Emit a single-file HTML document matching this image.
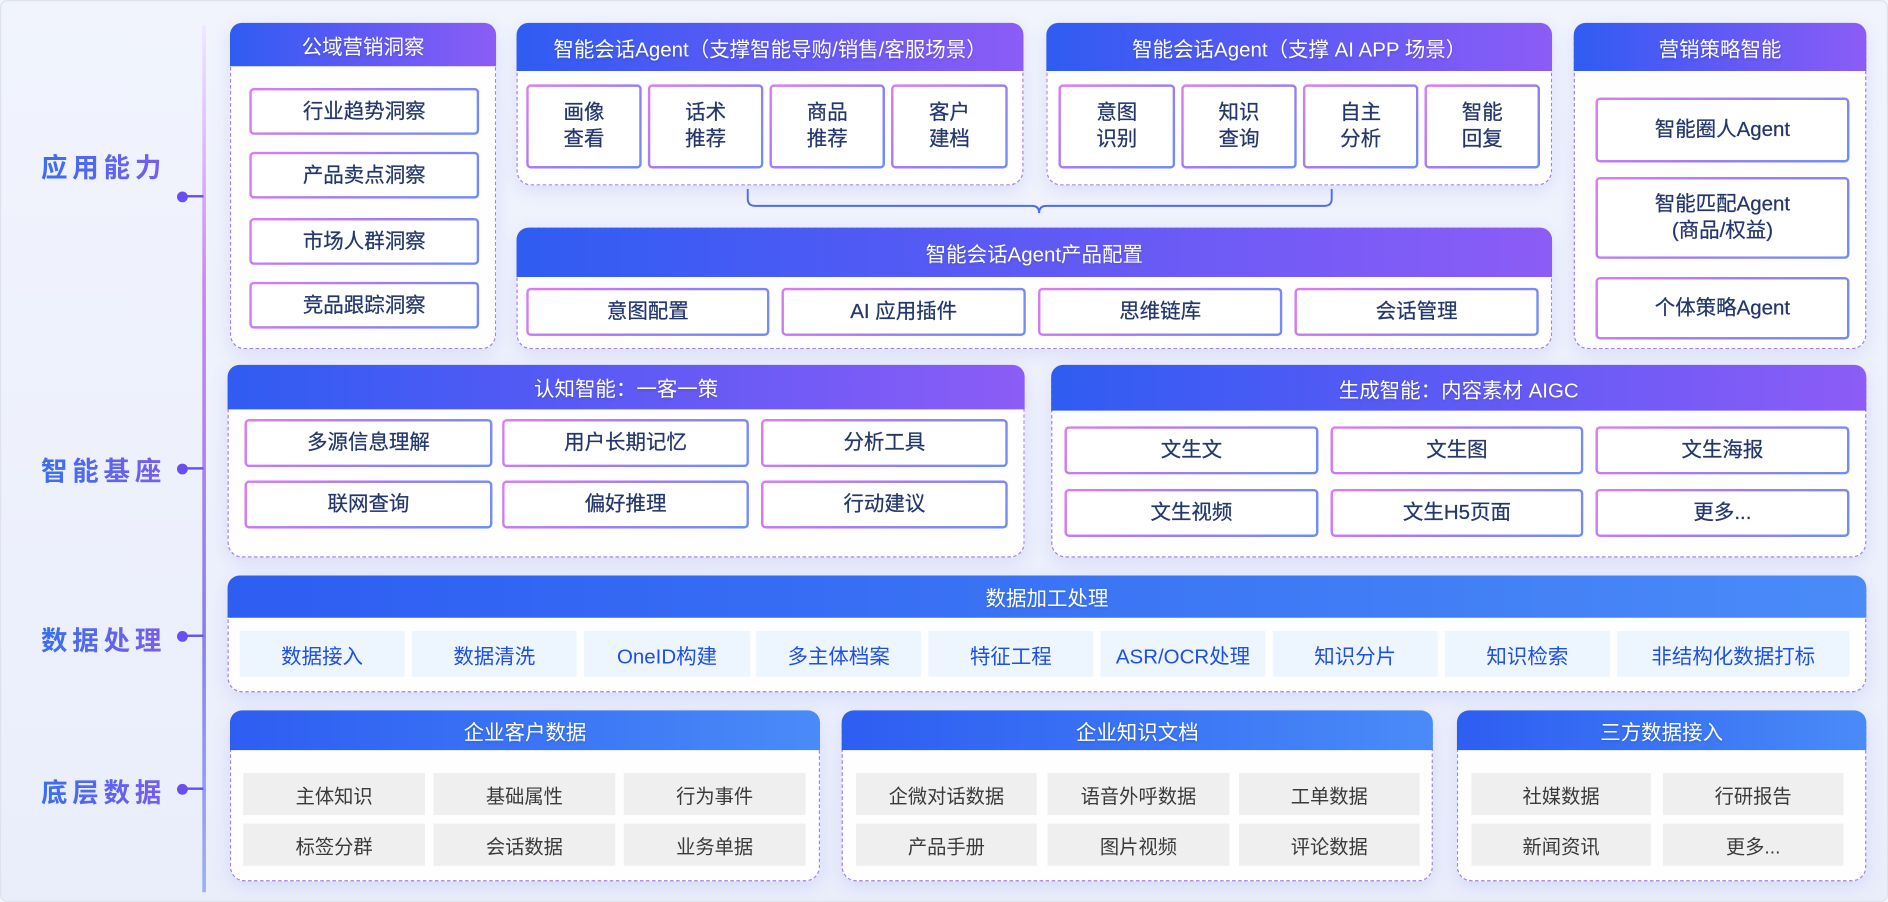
<!DOCTYPE html>
<html><head><meta charset="utf-8"><style>
*{margin:0;padding:0;box-sizing:border-box}
html,body{width:1888px;height:902px;overflow:hidden;background:#f3f5fc}
#w{position:absolute;left:0;top:0;width:1568px;height:749px;transform:scale(1.20408);transform-origin:0 0;background:linear-gradient(180deg,#f1f4fd,#eaeefb);border:1px solid #dde2ee;border-radius:6px;font-family:"Liberation Sans","Noto Sans CJK SC",sans-serif}
.a{position:absolute}
.card{position:absolute;border:1.8px dashed #a57ef2;border-radius:12px;background:rgba(255,255,255,.92);box-shadow:0 4px 14px rgba(120,130,230,.18)}
.hd{position:absolute;border-radius:10px 10px 0 0;background:linear-gradient(90deg,#2f5cf2,#5a5af5 45%,#8c5cf6);color:#fff;font-size:17px;display:flex;align-items:center;justify-content:center;text-shadow:0 1px 2px rgba(0,0,0,.15)}
.hb{background:linear-gradient(90deg,#2e5df2,#3d78f5 60%,#4a8bf8)}
.it{position:absolute;border:2px solid transparent;border-radius:4px;background:linear-gradient(#fff,#fff) padding-box,linear-gradient(135deg,#dd7cf4,#a07cf4 50%,#6d8ef5) border-box;color:#24376c;font-size:17px;display:flex;align-items:center;justify-content:center;text-align:center;line-height:22px;-webkit-text-stroke:0.2px #24376c}
.db{position:absolute;background:#edf5ff;color:#1e4fe6;font-size:17px;display:flex;align-items:center;justify-content:center}
.gr{position:absolute;background:#efefef;color:#3a3a3a;font-size:16px;display:flex;align-items:center;justify-content:center}
.lb{position:absolute;left:33px;font-size:22px;font-weight:bold;letter-spacing:4px;background:linear-gradient(90deg,#3a6ff0,#7a5cf0);-webkit-background-clip:text;color:transparent}
.dot{position:absolute;left:146px;width:9px;height:9px;border-radius:50%;background:#6a4ff0}
.dl{position:absolute;left:152px;width:16px;height:2px;background:#6a4ff0}
</style></head><body><div id="w">
<div class="a" style="left:167px;top:20px;width:3px;height:720px;background:linear-gradient(180deg,#f0e6ff,#c887f5 30%,#8a7ef3 70%,#9bb0f6)"></div>
<div class="lb" style="top:121px">应用能力</div><div class="dot" style="top:158px"></div><div class="dl" style="top:161px"></div>
<div class="lb" style="top:373px">智能基座</div><div class="dot" style="top:384px"></div><div class="dl" style="top:387px"></div>
<div class="lb" style="top:514px">数据处理</div><div class="dot" style="top:523px"></div><div class="dl" style="top:526px"></div>
<div class="lb" style="top:640px">底层数据</div><div class="dot" style="top:650px"></div><div class="dl" style="top:653px"></div>

<div class="card" style="left:190px;top:18px;width:221px;height:271px"></div>
<div class="hd" style="left:190px;top:18px;width:221px;height:36px">公域营销洞察</div>
<div class="it" style="left:206px;top:72px;width:191px;height:39px">行业趋势洞察</div>
<div class="it" style="left:206px;top:125px;width:191px;height:39px">产品卖点洞察</div>
<div class="it" style="left:206px;top:180px;width:191px;height:39px">市场人群洞察</div>
<div class="it" style="left:206px;top:233px;width:191px;height:39px">竞品跟踪洞察</div>

<div class="card" style="left:428px;top:18px;width:421px;height:135px"></div>
<div class="hd" style="left:428px;top:18px;width:421px;height:40px">智能会话Agent（支撑智能导购/销售/客服场景）</div>
<div class="it" style="left:436px;top:69px;width:96px;height:70px">画像<br>查看</div>
<div class="it" style="left:537px;top:69px;width:96px;height:70px">话术<br>推荐</div>
<div class="it" style="left:638px;top:69px;width:96px;height:70px">商品<br>推荐</div>
<div class="it" style="left:739px;top:69px;width:97px;height:70px">客户<br>建档</div>

<div class="card" style="left:868px;top:18px;width:420px;height:135px"></div>
<div class="hd" style="left:868px;top:18px;width:420px;height:40px">智能会话Agent（支撑 AI APP 场景）</div>
<div class="it" style="left:878px;top:69px;width:97px;height:70px">意图<br>识别</div>
<div class="it" style="left:980px;top:69px;width:96px;height:70px">知识<br>查询</div>
<div class="it" style="left:1081px;top:69px;width:96px;height:70px">自主<br>分析</div>
<div class="it" style="left:1182px;top:69px;width:96px;height:70px">智能<br>回复</div>

<svg class="a" style="left:0;top:0" width="1568" height="200"><path d="M620 156 V164 Q620 170 626 170 H856 Q862 170 862 176 Q862 170 868 170 H1099 Q1105 170 1105 164 V156" fill="none" stroke="#4b6cf0" stroke-width="1.6"/></svg>

<div class="card" style="left:428px;top:188px;width:860px;height:101px"></div>
<div class="hd" style="left:428px;top:188px;width:860px;height:41px">智能会话Agent产品配置</div>
<div class="it" style="left:436px;top:238px;width:202px;height:40px">意图配置</div>
<div class="it" style="left:648px;top:238px;width:203px;height:40px">AI 应用插件</div>
<div class="it" style="left:861px;top:238px;width:203px;height:40px">思维链库</div>
<div class="it" style="left:1074px;top:238px;width:203px;height:40px">会话管理</div>

<div class="card" style="left:1306px;top:18px;width:243px;height:271px"></div>
<div class="hd" style="left:1306px;top:18px;width:243px;height:40px">营销策略智能</div>
<div class="it" style="left:1324px;top:80px;width:211px;height:54px">智能圈人Agent</div>
<div class="it" style="left:1324px;top:146px;width:211px;height:68px">智能匹配Agent<br>(商品/权益)</div>
<div class="it" style="left:1324px;top:229px;width:211px;height:52px">个体策略Agent</div>

<div class="card" style="left:188px;top:302px;width:662px;height:160px"></div>
<div class="hd" style="left:188px;top:302px;width:662px;height:37px">认知智能：一客一策</div>
<div class="it" style="left:202px;top:347px;width:206px;height:40px">多源信息理解</div>
<div class="it" style="left:416px;top:347px;width:205px;height:40px">用户长期记忆</div>
<div class="it" style="left:631px;top:347px;width:205px;height:40px">分析工具</div>
<div class="it" style="left:202px;top:398px;width:206px;height:40px">联网查询</div>
<div class="it" style="left:416px;top:398px;width:205px;height:40px">偏好推理</div>
<div class="it" style="left:631px;top:398px;width:205px;height:40px">行动建议</div>

<div class="card" style="left:872px;top:302px;width:677px;height:160px"></div>
<div class="hd" style="left:872px;top:302px;width:677px;height:38px">生成智能：内容素材 AIGC</div>
<div class="it" style="left:883px;top:353px;width:211px;height:40px">文生文</div>
<div class="it" style="left:1104px;top:353px;width:210px;height:40px">文生图</div>
<div class="it" style="left:1324px;top:353px;width:211px;height:40px">文生海报</div>
<div class="it" style="left:883px;top:405px;width:211px;height:40px">文生视频</div>
<div class="it" style="left:1104px;top:405px;width:210px;height:40px">文生H5页面</div>
<div class="it" style="left:1324px;top:405px;width:211px;height:40px">更多...</div>

<div class="card" style="left:188px;top:477px;width:1361px;height:97px"></div>
<div class="hd hb" style="left:188px;top:477px;width:1361px;height:35px">数据加工处理</div>
<div class="db" style="left:198px;top:523px;width:137px;height:38px">数据接入</div>
<div class="db" style="left:341px;top:523px;width:137px;height:38px">数据清洗</div>
<div class="db" style="left:484px;top:523px;width:138px;height:38px">OneID构建</div>
<div class="db" style="left:627px;top:523px;width:137px;height:38px">多主体档案</div>
<div class="db" style="left:770px;top:523px;width:137px;height:38px">特征工程</div>
<div class="db" style="left:913px;top:523px;width:137px;height:38px">ASR/OCR处理</div>
<div class="db" style="left:1056px;top:523px;width:137px;height:38px">知识分片</div>
<div class="db" style="left:1199px;top:523px;width:137px;height:38px">知识检索</div>
<div class="db" style="left:1342px;top:523px;width:193px;height:38px">非结构化数据打标</div>

<div class="card" style="left:190px;top:589px;width:490px;height:142px"></div>
<div class="hd hb" style="left:190px;top:589px;width:490px;height:33px">企业客户数据</div>
<div class="gr" style="left:201px;top:641px;width:151px;height:35px">主体知识</div>
<div class="gr" style="left:359px;top:641px;width:151px;height:35px">基础属性</div>
<div class="gr" style="left:517px;top:641px;width:151px;height:35px">行为事件</div>
<div class="gr" style="left:201px;top:683px;width:151px;height:35px">标签分群</div>
<div class="gr" style="left:359px;top:683px;width:151px;height:35px">会话数据</div>
<div class="gr" style="left:517px;top:683px;width:151px;height:35px">业务单据</div>

<div class="card" style="left:698px;top:589px;width:491px;height:142px"></div>
<div class="hd hb" style="left:698px;top:589px;width:491px;height:33px">企业知识文档</div>
<div class="gr" style="left:710px;top:641px;width:150px;height:35px">企微对话数据</div>
<div class="gr" style="left:869px;top:641px;width:151px;height:35px">语音外呼数据</div>
<div class="gr" style="left:1028px;top:641px;width:150px;height:35px">工单数据</div>
<div class="gr" style="left:710px;top:683px;width:150px;height:35px">产品手册</div>
<div class="gr" style="left:869px;top:683px;width:151px;height:35px">图片视频</div>
<div class="gr" style="left:1028px;top:683px;width:150px;height:35px">评论数据</div>

<div class="card" style="left:1209px;top:589px;width:340px;height:142px"></div>
<div class="hd hb" style="left:1209px;top:589px;width:340px;height:33px">三方数据接入</div>
<div class="gr" style="left:1221px;top:641px;width:149px;height:35px">社媒数据</div>
<div class="gr" style="left:1380px;top:641px;width:150px;height:35px">行研报告</div>
<div class="gr" style="left:1221px;top:683px;width:149px;height:35px">新闻资讯</div>
<div class="gr" style="left:1380px;top:683px;width:150px;height:35px">更多...</div>
</div></body></html>
